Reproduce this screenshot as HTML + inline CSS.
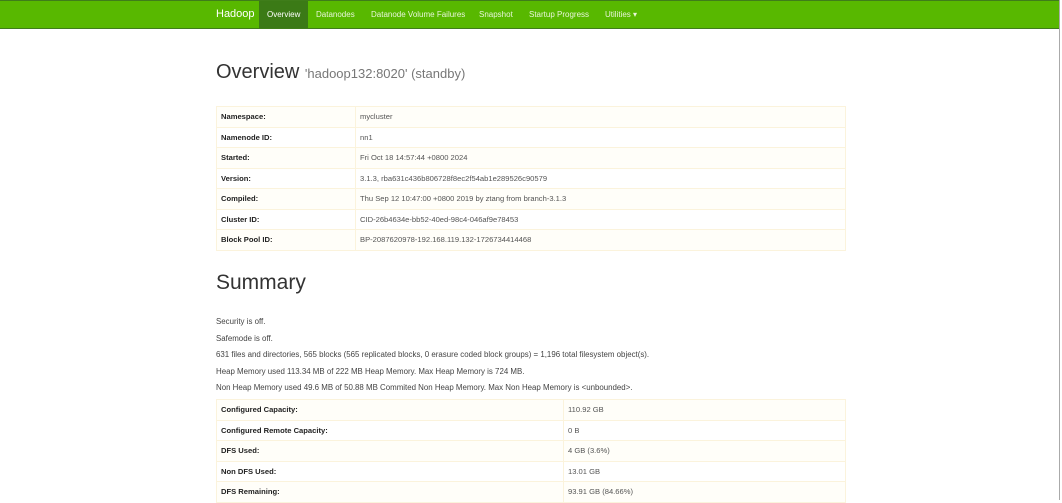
<!DOCTYPE html>
<html><head><style>
body{margin:0;width:1062px;height:500px;overflow:hidden;background:#fff;font-family:"Liberation Sans",Arial,sans-serif;color:#333;position:relative}
.nav{position:absolute;left:0;top:0;width:1059px;height:27px;background:#58b800;border-top:1px solid #3f7d1a;border-bottom:1px solid #3f7d1a}
.nav span{position:absolute;top:0;height:27px;line-height:27px;font-size:8px;color:#e8f5d8;white-space:nowrap}
.nav .brand{font-size:11px;color:#fff;left:216px}
.nav .act{background:#3b7a16;color:#fff;padding:0 8px;left:259px}
.sb{position:absolute;left:1059px;top:0;width:1px;height:500px;background:#aaa}
h1{position:absolute;left:216px;top:61px;margin:0;font-weight:normal;font-size:20px;color:#333}
h1 small{font-size:13px;color:#777}
h2{position:absolute;left:216px;top:271px;margin:0;font-weight:normal;font-size:21px;color:#333}
table{position:absolute;left:216px;width:630px;border-collapse:collapse;font-size:7.6px}
td{height:19.5px;border:1px solid #fbf3dc;padding:0 4px;vertical-align:middle}
td:first-child{font-weight:bold;color:#222}
td:last-child{color:#555}
tr:nth-child(odd){background:#fffef9}
p{position:absolute;left:216px;margin:0;font-size:7.9px;color:#444;white-space:nowrap}
</style></head><body>
<div class="nav">
<span class="brand">Hadoop</span>
<span class="act">Overview</span>
<span style="left:316px">Datanodes</span>
<span style="left:371px">Datanode Volume Failures</span>
<span style="left:479px">Snapshot</span>
<span style="left:529px">Startup Progress</span>
<span style="left:605px">Utilities ▾</span>
</div>
<div class="sb"></div>
<h1>Overview <small>'hadoop132:8020' (standby)</small></h1>
<table style="top:106px">
<tr><td style="width:130px">Namespace:</td><td>mycluster</td></tr>
<tr><td>Namenode ID:</td><td>nn1</td></tr>
<tr><td>Started:</td><td>Fri Oct 18 14:57:44 +0800 2024</td></tr>
<tr><td>Version:</td><td>3.1.3, rba631c436b806728f8ec2f54ab1e289526c90579</td></tr>
<tr><td>Compiled:</td><td>Thu Sep 12 10:47:00 +0800 2019 by ztang from branch-3.1.3</td></tr>
<tr><td>Cluster ID:</td><td>CID-26b4634e-bb52-40ed-98c4-046af9e78453</td></tr>
<tr><td>Block Pool ID:</td><td>BP-2087620978-192.168.119.132-1726734414468</td></tr>
</table>
<h2>Summary</h2>
<p style="top:317px">Security is off.</p>
<p style="top:334px">Safemode is off.</p>
<p style="top:350px">631 files and directories, 565 blocks (565 replicated blocks, 0 erasure coded block groups) = 1,196 total filesystem object(s).</p>
<p style="top:367px">Heap Memory used 113.34 MB of 222 MB Heap Memory. Max Heap Memory is 724 MB.</p>
<p style="top:383px">Non Heap Memory used 49.6 MB of 50.88 MB Commited Non Heap Memory. Max Non Heap Memory is &lt;unbounded&gt;.</p>
<table style="top:399px">
<tr><td style="width:338px">Configured Capacity:</td><td>110.92 GB</td></tr>
<tr><td>Configured Remote Capacity:</td><td>0 B</td></tr>
<tr><td>DFS Used:</td><td>4 GB (3.6%)</td></tr>
<tr><td>Non DFS Used:</td><td>13.01 GB</td></tr>
<tr><td>DFS Remaining:</td><td>93.91 GB (84.66%)</td></tr>
</table>
</body></html>
